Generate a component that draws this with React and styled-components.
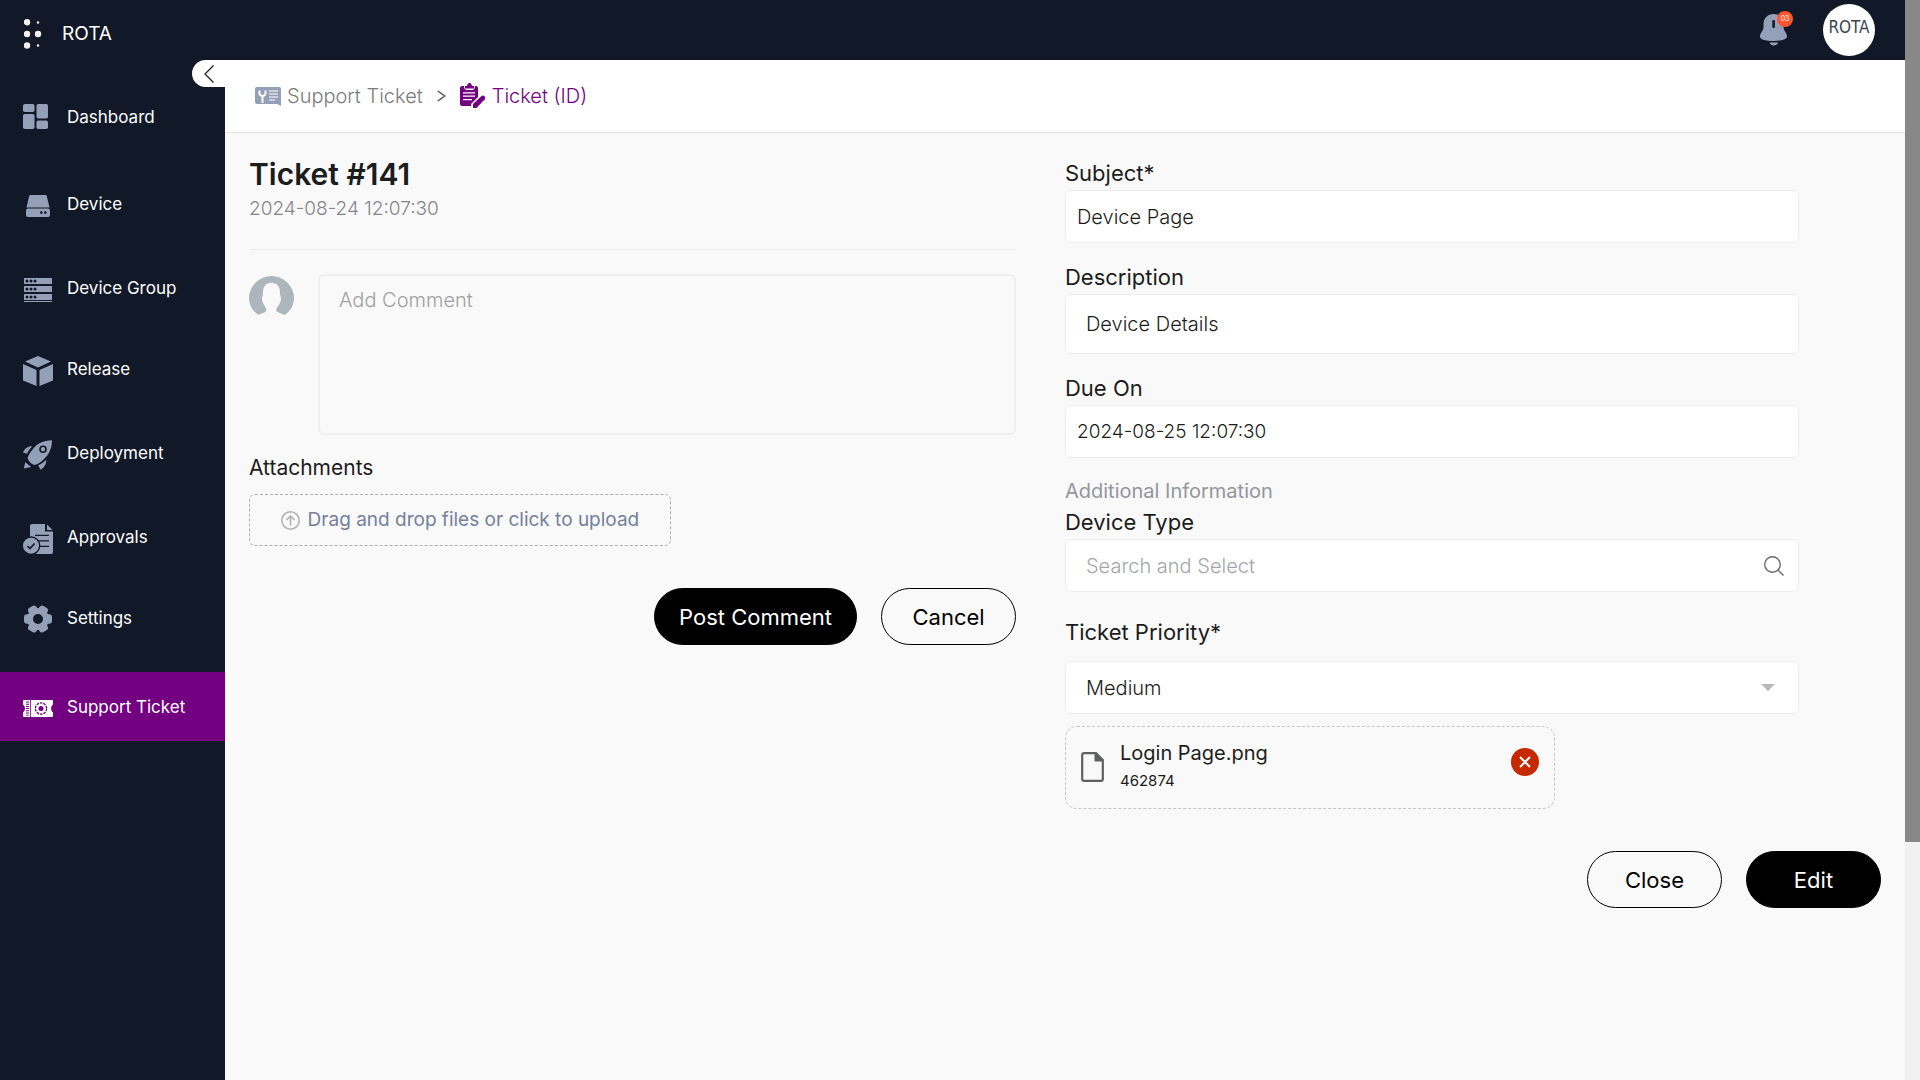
import React from "react";
import styled, { createGlobalStyle } from "styled-components";

const NAVY = "#111827";
const PURPLE = "#720080";
const SLATE = "#94a0b8";

const GlobalStyle = createGlobalStyle`
  * { box-sizing: border-box; }
  body {
    margin: 0;
    background: #f9f9f9;
    color: #1c1c1c;
    font-family: Inter, "Open Sans", sans-serif;
    font-size: 20px;
    line-height: 28px;
  }
  button, input, textarea, select { font: inherit; color: inherit; }
  svg { display: block; flex: none; }
`;

const Shell = styled.div`
  display: flex;
  height: 100vh;
`;

const Page = styled.div`
  flex: 1;
  min-width: 0;
  display: flex;
  flex-direction: column;
`;

const ScrollTrack = styled.div`
  width: 15px;
  background: #f1f1f1;
`;

const ScrollThumb = styled.div`
  height: 78%;
  background: #888;
`;

const Header = styled.header`
  display: flex;
  align-items: center;
  justify-content: space-between;
  height: 60px;
  padding: 0 30px 0 24px;
  background: ${NAVY};
  color: #fff;
`;

const Brand = styled.a`
  display: flex;
  align-items: center;
  gap: 20px;
  padding-top: 8px;
  color: #fff;
  font-size: 19px;
  text-decoration: none;
`;

const HeaderTools = styled.div`
  display: flex;
  align-items: center;
  gap: 36px;
`;

const BellButton = styled.button`
  position: relative;
  padding: 0;
  border: 0;
  background: none;
`;

const Badge = styled.span`
  position: absolute;
  top: -3px;
  right: -6px;
  width: 16px;
  height: 16px;
  border-radius: 50%;
  background: #ff5630;
  color: #fff;
  font-size: 7px;
  line-height: 16px;
  text-align: center;
`;

const Profile = styled.button`
  width: 52px;
  height: 52px;
  padding: 0 0 6px;
  border: 0;
  border-radius: 50%;
  background: #fff;
  color: #37474f;
  font-family: "DejaVu Sans Condensed", "Open Sans", sans-serif;
  font-size: 17px;
  text-align: center;
`;

const Body = styled.div`
  flex: 1;
  display: flex;
  min-height: 0;
`;

const Sidebar = styled.aside`
  position: relative;
  flex: none;
  width: 225px;
  padding-top: 22px;
  background: ${NAVY};
`;

const CollapseButton = styled.button`
  position: absolute;
  top: 0;
  right: 0;
  width: 33px;
  height: 27px;
  padding: 0 0 0 12px;
  border: 0;
  border-radius: 14px 0 0 14px;
  background: #fff;
`;

const NavLink = styled.a`
  display: flex;
  align-items: center;
  gap: 14px;
  height: 69px;
  margin-top: ${(p) => p.$gap}px;
  padding-left: 23px;
  background: ${(p) => (p.$active ? PURPLE : "transparent")};
  color: #fff;
  font-size: 17px;
  text-decoration: none;
`;

const NavIcon = styled.span`
  display: flex;
  justify-content: ${(p) => (p.$start ? "flex-start" : "center")};
  width: 30px;
`;

const Main = styled.main`
  flex: 1;
  min-width: 0;
`;

const Breadcrumb = styled.nav`
  display: flex;
  align-items: center;
  height: 73px;
  padding: 0 30px;
  border-bottom: 1px solid #e3e3e3;
  background: #fff;
  font-weight: 300;
`;

const Crumb = styled.a`
  display: flex;
  align-items: center;
  gap: 6px;
  color: ${(p) => (p.$current ? PURPLE : "#7b7b7b")};
  text-decoration: none;
`;

const CrumbArrow = styled.span`
  padding: 0 14px;
`;

const Columns = styled.div`
  display: grid;
  grid-template-columns: 47fr 50fr;
  column-gap: 3%;
  padding: 24px;
`;

const TicketHead = styled.div`
  padding-bottom: 23px;
  border-bottom: 1px solid #ececec;
`;

const Title = styled.h1`
  margin: 0;
  font-size: 30px;
  font-weight: 600;
  line-height: 35px;
`;

const Stamp = styled.div`
  color: #85858b;
  font-size: 19px;
  font-weight: 300;
  line-height: 34px;
`;

const CommentRow = styled.div`
  display: flex;
  gap: 24px;
  padding-top: 24px;
`;

const CommentBox = styled.textarea`
  flex: 1;
  height: 161px;
  padding: 10px 19px;
  border: 2px solid #efefef;
  border-radius: 6px;
  background: transparent;
  font-weight: 300;
  resize: none;
  &::placeholder { color: #a0a0a0; }
`;

const SectionTitle = styled.h2`
  margin: 19px 0 12px;
  font-size: 21px;
  font-weight: 400;
`;

const HiddenFile = styled.input`
  position: absolute;
  width: 1px;
  height: 1px;
  opacity: 0;
`;

const DropZone = styled.label`
  display: flex;
  align-items: center;
  justify-content: center;
  gap: 8px;
  width: 55%;
  height: 52px;
  border: 1px dashed #b0b0b0;
  border-radius: 6px;
  color: #75809c;
  font-size: 19px;
`;

const Actions = styled.div`
  display: flex;
  justify-content: flex-end;
  gap: 24px;
  margin-top: 42px;
`;

const PillButton = styled.button`
  min-width: 135px;
  height: 57px;
  padding: 0 24px;
  border: 1px solid #000;
  border-radius: 29px;
  background: ${(p) => (p.$solid ? "#000" : "transparent")};
  color: ${(p) => (p.$solid ? "#fff" : "#000")};
  font-size: 22px;
`;

const Field = styled.div`
  width: 90%;
  margin-bottom: ${(p) => (p.$wide ? 24 : 18)}px;
`;

const Label = styled.label`
  display: block;
  font-size: 22px;
  line-height: 33px;
  padding-bottom: ${(p) => (p.$spaced ? 12 : 0)}px;
`;

const Control = styled.div`
  display: flex;
  align-items: center;
  position: relative;
  height: ${(p) => (p.$tall ? 60 : 53)}px;
  padding: 0 ${(p) => (p.$inset ? "14px 0 20px" : "11px")};
  border: 1px solid #eee;
  border-radius: 6px;
  background: #fff;
`;

const TextInput = styled.input`
  flex: 1;
  min-width: 0;
  padding: 0;
  border: 0;
  outline: 0;
  background: transparent;
  font-size: ${(p) => (p.$date ? 19 : 20)}px;
  font-weight: 300;
  &::placeholder { color: #a3a6ab; }
`;

const TextArea = styled.textarea`
  flex: 1;
  height: 28px;
  padding: 0;
  border: 0;
  outline: 0;
  background: transparent;
  font-weight: 300;
  resize: none;
`;

const Select = styled.select`
  flex: 1;
  height: 100%;
  padding: 0;
  border: 0;
  outline: 0;
  background: transparent;
  appearance: none;
  font-weight: 300;
`;

const Caret = styled.svg`
  position: absolute;
  right: 23px;
  pointer-events: none;
`;

const SubHeading = styled.div`
  color: #95959c;
  line-height: 30px;
`;

const FileCard = styled.div`
  display: flex;
  width: 60%;
  height: 83px;
  margin-top: -6px;
  padding: 12px 15px;
  gap: 16px;
  border: 1px dashed #c4c7c7;
  border-radius: 12px;
`;

const FileIcon = styled.span`
  padding-top: 13px;
`;

const FileText = styled.div`
  flex: 1;
`;

const FileSize = styled.div`
  font-size: 15px;
`;

const RemoveButton = styled.button`
  align-self: flex-start;
  margin-top: 9px;
  padding: 0;
  border: 0;
  background: none;
`;

const TEETH = [0, 60, 120];

const icons = {
  dashboard: (
    <svg width="25" height="25" fill={SLATE}>
      <rect width="11.5" height="8" rx="1.8" />
      <rect y="10" width="11.5" height="15" rx="1.8" />
      <rect x="13.5" width="11.5" height="14.5" rx="1.8" />
      <rect x="13.5" y="16.5" width="11.5" height="8.5" rx="1.8" />
    </svg>
  ),
  device: (
    <svg width="24" height="26" fill={SLATE}>
      <path d="M4.5 4h15q1 0 1.300 1l2.700 11.500H.5L3.200 5q.3-1 1.300-1z" />
      <rect y="17.500" width="24" height="8.500" rx="2" />
      <circle cx="15.300" cy="21.600" r="1.300" fill={NAVY} />
      <circle cx="19.300" cy="21.600" r="1.300" fill={NAVY} />
    </svg>
  ),
  group: (
    <svg width="28" height="28" fill={SLATE}>
      {[4, 12, 20].map((y) => (
        <g key={y}>
          <rect y={y} width="28" height="6" rx=".5" />
          {[3, 7, 11].map((x) => <circle key={x} cx={x} cy={y + 3} r="1.500" fill={NAVY} />)}
        </g>
      ))}
      <rect y="27" width="28" height="1" />
    </svg>
  ),
  release: (
    <svg width="30" height="34" viewBox="0 -4 30 34" fill={SLATE}>
      <path d="M2 5.500 15 0l13 5.500L15 11.500zM0 8l13.500 6v16L0 24.500zM30 8l-13.500 6v16L30 24.500z" />
    </svg>
  ),
  deployment: (
    <svg width="30" height="34" viewBox="0 -4 30 34" fill={SLATE}>
      <path d="M29 .2C20 .5 14 3.500 9.500 9.500 7.500 12 5.500 15 4.500 18c1 3 3.500 6 7 7 4-1 8-4 11-7.500C27 12.500 29 7 29 .2z" />
      <path d="M9.300 6.200C5 6 1.500 8.500 0 12.500l4 1.300C5.300 11 7 8.500 9.300 6.200zM23.200 19.700c.3 4-1.500 7.500-5.700 10l-2.300-4.500c3-1 5.700-3 8-5.500zM2.200 22.300l6 4.700L.8 28.500z" />
      <circle cx="20" cy="9.300" r="3" stroke={NAVY} strokeWidth="1.600" />
    </svg>
  ),
  approvals: (
    <svg width="30" height="34" viewBox="0 -4 30 34" fill={SLATE}>
      <path d="M9 0h13v7.500h8V28q0 2-2 2H7V2q0-2 2-2zM24 .5l5.500 5.500H24z" />
      <path d="M12 11.300h14M12 16.800h14M12 22.300h14" stroke={NAVY} strokeWidth="1.300" />
      <circle cx="8" cy="21.700" r="8.700" stroke={NAVY} strokeWidth="1.400" />
      <path d="m4.500 22 2.500 2.500 4.500-5" fill="none" stroke={NAVY} strokeWidth="1.700" />
    </svg>
  ),
  settings: (
    <svg width="28" height="31" viewBox="-14 -17 28 31" fill={SLATE}>
      <circle r="11" />
      {TEETH.map((a) => <rect key={a} x="-14" y="-4.700" width="28" height="9.400" rx="3" transform={`rotate(${a})`} />)}
      <circle r="5" fill={NAVY} />
    </svg>
  ),
  support: (
    <svg width="30" height="20" viewBox="0 -3 30 20">
      <path d="M1 0h28q1 0 1 1v3.500q-2 1.500-2 4t2 4V16q0 1-1 1H1q-1 0-1-1v-3.500q2-1.500 2-4t-2-4V1q0-1 1-1z" fill="#fff" />
      <path d="M4.500 1.500v14" stroke={PURPLE} strokeWidth="3" strokeDasharray="1 1.200" />
      <path d="M7.500 0v17" stroke={PURPLE} strokeWidth=".8" />
      <circle cx="18" cy="8.500" r="5.600" fill="none" stroke={PURPLE} strokeWidth="1.300" strokeDasharray="2.600 .9" />
      <circle cx="18" cy="8.500" r="2.500" fill={PURPLE} />
    </svg>
  ),
};

const navItems = [
  { icon: "dashboard", label: "Dashboard", gap: 0 },
  { icon: "device", label: "Device", gap: 18 },
  { icon: "group", label: "Device Group", gap: 15 },
  { icon: "release", label: "Release", gap: 12 },
  { icon: "deployment", label: "Deployment", gap: 15 },
  { icon: "approvals", label: "Approvals", gap: 15 },
  { icon: "settings", label: "Settings", gap: 12 },
  { icon: "support", label: "Support Ticket", gap: 20, active: true },
];

export default function App() {
  return (
    <Shell>
      <GlobalStyle />
      <Page>
        <Header>
          <Brand href="#">
            <svg width="18" height="30" fill="#f5f5f5">
              <circle cx="3" cy="3.200" r="3.200" />
              <circle cx="3" cy="15" r="3.200" />
              <circle cx="14" cy="15" r="3.200" />
              <circle cx="3" cy="26.500" r="3.200" />
              <circle cx="14" cy="3.500" r="1.200" />
              <circle cx="14" cy="26.500" r="1.200" />
            </svg>
            ROTA
          </Brand>
          <HeaderTools>
            <BellButton aria-label="Notifications">
              <svg width="27" height="32" fill={SLATE}>
                <path d="M13.500 0C7.500 0 3.500 4.500 3.500 10v3C3.500 17 0 18.500 0 22.500c0 3 5.500 4.500 13.500 4.500S27 25.500 27 22.500c0-4-3.500-5.500-3.500-9.500v-3C23.500 4.500 19.500 0 13.500 0zM9.300 28.500h9q-1.500 3-4.500 3t-4.500-3z" />
                <rect x="12.300" y="6" width="2.600" height="8" rx="1.300" fill={NAVY} />
              </svg>
              <Badge>03</Badge>
            </BellButton>
            <Profile>ROTA</Profile>
          </HeaderTools>
        </Header>
        <Body>
          <Sidebar>
            <CollapseButton aria-label="Collapse menu">
              <svg width="10" height="18" fill="none" stroke="#222" strokeWidth="1.300">
                <path d="M9.500.5 1 9l8.500 8.500" />
              </svg>
            </CollapseButton>
            <nav>
              {navItems.map((item) => (
                <NavLink key={item.label} href="#" $gap={item.gap} $active={item.active}>
                  <NavIcon $start={item.icon === "dashboard"}>{icons[item.icon]}</NavIcon>
                  {item.label}
                </NavLink>
              ))}
            </nav>
          </Sidebar>
          <Main>
            <Breadcrumb>
              <Crumb href="#">
                <svg width="26" height="19">
                  <path d="M2 0h22q2 0 2 2v17l-4-2H2q-2 0-2-2V2q0-2 2-2z" fill={SLATE} />
                  <path d="M4.500 3.500v3q0 2 3 2.500 3-.5 3-2.500v-3M7.500 8.500V16" fill="none" stroke="#fff" strokeWidth="2" />
                  <path d="M14 4h9M14 7h9M14 10h9M14 13h6" stroke="#fff" strokeWidth="1.200" />
                </svg>
                Support Ticket
              </Crumb>
              <CrumbArrow>
                <svg width="9" height="12" fill="none" stroke="#555" strokeWidth="1.500">
                  <path d="m.8 1 7 5-7 5" />
                </svg>
              </CrumbArrow>
              <Crumb href="#" $current>
                <svg width="26" height="26" fill={PURPLE}>
                  <path d="M2 3h2q0 4 3 4h5q3 0 3-4h1q2 0 2 2v9l-7 7v2H2q-2 0-2-2V5q0-2 2-2z" />
                  <path d="M5 5.500V3h2q.5-3 2.500-3T12 3h2v2.500z" />
                  <path d="M3 9.800h12M3 13.200h12M3 16.600h9" stroke="#fff" strokeWidth="1.200" />
                  <path d="M13 25v-4l8.500-8q1.500-1 3 .3 1.500 1.500.3 3L16.500 25z" />
                </svg>
                Ticket (ID)
              </Crumb>
            </Breadcrumb>
            <Columns>
              <section>
                <TicketHead>
                  <Title>Ticket #141</Title>
                  <Stamp>2024-08-24 12:07:30</Stamp>
                </TicketHead>
                <CommentRow>
                  <svg width="45" height="42" viewBox="0 -2 45 42" fill="#adb5bd">
                    <path d="M22.500 0A22.500 22.500 0 0 0 0 22c0 7 3.500 13 9.500 17 3.500-2 7.500-2.500 7.800-4.500.2-3-2.300-4.500-3.300-8-1.500-2-1-6 0-8C13.500 11 16.500 6.800 22.500 6.800S31.500 11 31 18.500c1 2 1.500 6 0 8-1 3.500-4 5-3.800 8 .3 2 4.800 2.500 8.300 4.500 6-4 9.500-10 9.500-17A22.500 22.500 0 0 0 22.500 0z" />
                  </svg>
                  <CommentBox aria-label="Add Comment" placeholder="Add Comment" />
                </CommentRow>
                <SectionTitle>Attachments</SectionTitle>
                <DropZone htmlFor="attachments">
                  <HiddenFile id="attachments" type="file" />
                  <svg width="19" height="19" fill="none" stroke="#b0b0b0" strokeWidth="1.500">
                    <circle cx="9.500" cy="9.500" r="8.700" />
                    <path d="M9.500 14.500V5.500M5.500 9l4-4 4 4" />
                  </svg>
                  Drag and drop files or click to upload
                </DropZone>
                <Actions>
                  <PillButton $solid>Post Comment</PillButton>
                  <PillButton>Cancel</PillButton>
                </Actions>
              </section>
              <section>
                <Field>
                  <Label htmlFor="subject">Subject*</Label>
                  <Control><TextInput id="subject" defaultValue="Device Page" /></Control>
                </Field>
                <Field>
                  <Label htmlFor="description">Description</Label>
                  <Control $tall $inset><TextArea id="description" rows={1} defaultValue="Device Details" /></Control>
                </Field>
                <Field>
                  <Label htmlFor="due">Due On</Label>
                  <Control><TextInput id="due" $date defaultValue="2024-08-25 12:07:30" /></Control>
                </Field>
                <SubHeading>Additional Information</SubHeading>
                <Field $wide>
                  <Label htmlFor="type">Device Type</Label>
                  <Control $inset>
                    <TextInput id="type" placeholder="Search and Select" />
                    <svg width="20" height="20" fill="none" stroke="#6b6b6b" strokeWidth="1.400">
                      <circle cx="8.500" cy="8.500" r="7.800" />
                      <path d="m14 14 5.500 5.500" />
                    </svg>
                  </Control>
                </Field>
                <Field>
                  <Label htmlFor="priority" $spaced>Ticket Priority*</Label>
                  <Control $inset>
                    <Select id="priority" defaultValue="Medium">
                      <option>Low</option>
                      <option>Medium</option>
                      <option>High</option>
                    </Select>
                    <Caret width="14" height="7" fill="#b8b8b8"><path d="M0 0h14L7 7z" /></Caret>
                  </Control>
                </Field>
                <FileCard>
                  <FileIcon>
                    <svg width="23" height="30" fill="none" stroke="#5f6060" strokeWidth="2.200">
                      <path d="M3 1.200h12L21.800 8v19q0 1.800-1.800 1.800H3q-1.800 0-1.800-1.800V3q0-1.800 1.800-1.800z" />
                      <path d="M14 1v8h8z" fill="#5f6060" strokeWidth="1" />
                    </svg>
                  </FileIcon>
                  <FileText>
                    <div>Login Page.png</div>
                    <FileSize>462874</FileSize>
                  </FileText>
                  <RemoveButton aria-label="Remove file">
                    <svg width="28" height="28">
                      <circle cx="14" cy="14" r="14" fill="#c62800" />
                      <path d="m9 9 10 10M19 9 9 19" stroke="#fff" strokeWidth="2" />
                    </svg>
                  </RemoveButton>
                </FileCard>
                <Actions>
                  <PillButton>Close</PillButton>
                  <PillButton $solid>Edit</PillButton>
                </Actions>
              </section>
            </Columns>
          </Main>
        </Body>
      </Page>
      <ScrollTrack>
        <ScrollThumb />
      </ScrollTrack>
    </Shell>
  );
}
